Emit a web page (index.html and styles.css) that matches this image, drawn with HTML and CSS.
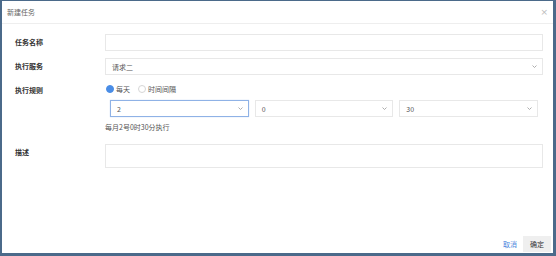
FILE: index.html
```html
<!DOCTYPE html>
<html>
<head>
<meta charset="utf-8" />
<title>新建任务</title>
<link rel="stylesheet" href="styles.css">
</head>
<body>
	<div class="modal">
		<div class="modal-head">
			<span class="modal-title">新建任务</span>
			<span class="close">×</span>
		</div>
		<div class="modal-body">
			<div class="form-row">
				<label class="form-label">任务名称</label>
				<div class="form-field"><div class="input"></div></div>
			</div>
			<div class="form-row">
				<label class="form-label">执行服务</label>
				<div class="form-field">
					<div class="input select"><span>请求二</span><svg class="arrow" width="5" height="3" viewBox="0 0 5 3"><polyline points="0.5,0.5 2.5,2.5 4.5,0.5" /></svg></div>
				</div>
			</div>
			<div class="form-row">
				<label class="form-label">执行规则</label>
				<div class="form-field">
					<div class="radios">
						<span class="radio checked"></span><span class="radio-text">每天</span>
						<span class="radio"></span><span class="radio-text">时间间隔</span>
					</div>
					<div class="time-row">
						<div class="input select focus"><span>2</span><svg class="arrow" width="5" height="3" viewBox="0 0 5 3"><polyline points="0.5,0.5 2.5,2.5 4.5,0.5" /></svg></div>
						<div class="input select"><span>0</span><svg class="arrow" width="5" height="3" viewBox="0 0 5 3"><polyline points="0.5,0.5 2.5,2.5 4.5,0.5" /></svg></div>
						<div class="input select"><span>30</span><svg class="arrow" width="5" height="3" viewBox="0 0 5 3"><polyline points="0.5,0.5 2.5,2.5 4.5,0.5" /></svg></div>
					</div>
					<p class="hint">每月2号0时30分执行</p>
				</div>
			</div>
			<div class="form-row">
				<label class="form-label">描述</label>
				<div class="form-field"><div class="input textarea"></div></div>
			</div>
		</div>
		<div class="modal-foot">
			<a class="btn-link" href="javascript:;">取消</a>
			<span class="btn">确定</span>
		</div>
	</div>
</body>
</html>
```

FILE: styles.css
```css
body, p, label {margin:0; padding:0;}
a {text-decoration:none;}

body {font-family: "Noto Sans CJK SC", "Liberation Sans", sans-serif; font-size: 7px; color: #555;}

.modal {width: 556px; height: 256px; box-sizing: border-box; border-style: solid; border-color: #4b6a8a; border-width: 1px 3px 3px 2px; background: #fff; display: flex; flex-direction: column;}

.modal-head {height: 22px; flex: none; border-bottom: 1px solid #eee; display: flex; align-items: center; justify-content: space-between; padding: 0 5px 0 5px;}
.modal-title {color: #666;}
.close {color: #bbb; font-size: 9px; font-family: "DejaVu Sans", sans-serif;}

.modal-body {flex: 1; padding: 10px 0 0 13px; display: flex; flex-direction: column; gap: 7px;}
.form-row {display: flex;}
.form-label {width: 90px; flex: none; line-height: 17px; color: #333; font-weight: bold;}
.form-field {width: 438px;}

.input {height: 17px; box-sizing: border-box; border: 1px solid #e8e8e8; display: flex; align-items: center; padding: 0 5px 0 6px; color: #555;}
.select {justify-content: space-between;}
.select .arrow {fill: none; stroke: #999; stroke-width: 0.8;}
.focus {border-color: #8fb2e6; box-shadow: 0 0 1px #b8cff0;}
.textarea {height: 24px;}

.radios {height: 14px; display: flex; align-items: center;}
.radio {width: 8px; height: 8px; box-sizing: border-box; border-radius: 50%; border: 1px solid #d6d6d6; margin: 0 2px 0 1px;}
.radio.checked {background: #4a8de6; border-color: #4a8de6;}
.radio-text {margin-right: 7px;}

.time-row {display: flex; gap: 6px; padding: 0 5px; margin-top: 4px;}
.time-row .input {flex: 1;}

.hint {line-height: 12px; margin: 4px 0 4px 0;}

.modal-foot {flex: none; display: flex; justify-content: flex-end; align-items: center; gap: 6px; padding: 0 2px 1px 0;}
.btn-link {color: #4d86dc;}
.btn {height: 16px; line-height: 16px; padding: 0 7px; background: #efefef; color: #333;}
```
